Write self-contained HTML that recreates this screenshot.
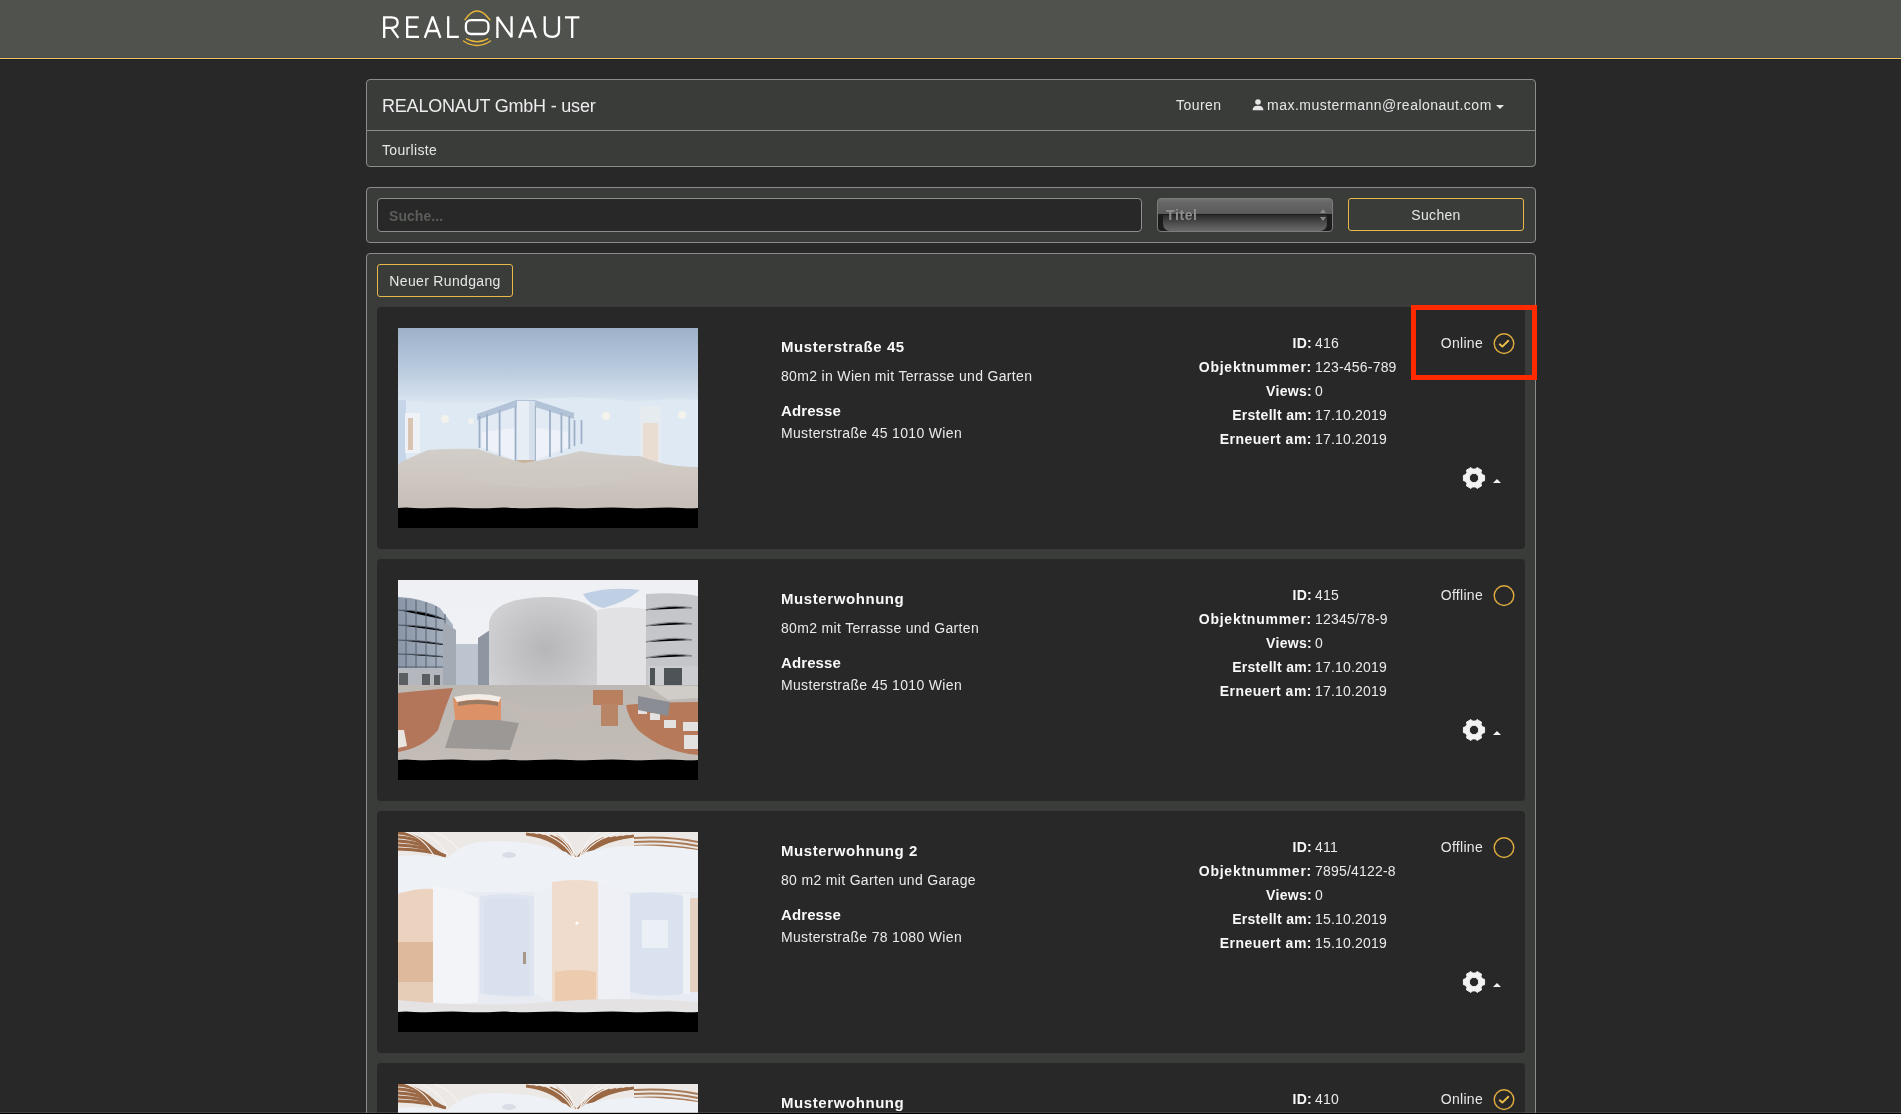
<!DOCTYPE html>
<html><head><meta charset="utf-8">
<style>
*{box-sizing:border-box;margin:0;padding:0}
html,body{-webkit-font-smoothing:antialiased;width:1901px;height:1114px;overflow:hidden;background:#282828;font-family:"Liberation Sans",sans-serif;color:#e6e6e6}
.abs{position:absolute}
#hdr{position:absolute;left:0;top:0;width:1901px;height:58px;background:#50524e}
#hdr .l1{position:absolute;left:0;top:57px;width:100%;height:1px;background:#484c52}
#hdr .l2{position:absolute;left:0;top:58px;width:100%;height:1px;background:#f0c55c}
#hdr .l3{position:absolute;left:0;top:59px;width:100%;height:1px;background:#181d26}
#logo{position:absolute;left:0;top:0}
.panel{position:absolute;left:366px;width:1170px;background:#3a3c3a;border:1px solid #8c8c8c;border-radius:4px}
.t14{font-size:14px;letter-spacing:0.33px;white-space:nowrap;line-height:14px}
.card{position:absolute;left:377px;width:1148px;height:242px;background:#282828;border-radius:4px}
.img{position:absolute;left:21px;top:21px;width:300px;height:200px;overflow:hidden;background:#000}
.img svg{display:block}
.title{position:absolute;left:404px;top:32px;font-size:15px;line-height:15px;font-weight:bold;letter-spacing:0.58px;white-space:nowrap;color:#f8f8f8}
.t2{top:96px;letter-spacing:0.1px}
.desc{position:absolute;left:404px;font-size:14px;line-height:14px;letter-spacing:0.33px;white-space:nowrap;color:#eaeaea}
.d1{top:62px}
.d2{top:119px}
.info{position:absolute;left:934px;top:24px;width:200px;height:130px}
.row{position:absolute;left:0;height:24px;line-height:24px;font-size:14px;white-space:nowrap}
.row b{position:absolute;right:-1px;letter-spacing:0.3px;color:#f8f8f8;font-weight:bold}
.row span{position:absolute;left:4px;letter-spacing:0.2px;color:#eaeaea}
.status{position:absolute;right:42px;top:29px;font-size:14px;line-height:14px;letter-spacing:0.3px;color:#e6e6e6;white-space:nowrap}
.chk{position:absolute;left:1115px;top:25px}
.gear{position:absolute;left:1084.8px;top:158.6px}
.caret{position:absolute;left:1116px;top:172px;width:0;height:0;border-left:4px solid transparent;border-right:4px solid transparent;border-bottom:4px solid #f2f2f2}
.btn{position:absolute;border:1px solid #e8b84a;border-radius:3px;font-size:14px;letter-spacing:0.33px;color:#e6e6e6;text-align:center;white-space:nowrap}

#root{position:absolute;left:0;top:0;width:1901px;height:1114px;will-change:transform}

</style></head><body>
<div id="root">
<div id="hdr"><div class="l1"></div><div class="l2"></div><div class="l3"></div>
<svg id="logo" width="620" height="58" viewBox="0 0 620 58">
 <g fill="none" stroke="#ffffff" stroke-width="2.3" stroke-linejoin="miter" stroke-miterlimit="1.6">
  <path d="M384.2 37.9 V17.4 H391.5 Q397.6 17.4 397.6 22.6 Q397.6 27.8 391.5 27.8 H384.2 M391.2 27.8 L398.4 37.9"/>
  <path d="M418.8 17.4 H407.2 V36.8 H419 M407.2 26.9 H417.4"/>
  <path d="M424.8 37.9 L432.6 16.6 L440.4 37.9 M427.3 31 H437.9"/>
  <path d="M448.2 16.3 V36.8 H458.8"/>
  <path d="M497.4 37.9 V17 L511.6 37.2 V16.3"/>
  <path d="M519.2 37.9 L527.6 16.6 L536 37.9 M521.8 31 H533.4"/>
  <path d="M544.7 16.3 V30.2 Q544.7 36.8 552.2 36.8 Q559.0 36.8 559.0 30.2 V16.3"/>
  <path d="M565 17.4 H579.4 M572.2 17.4 V37.9"/>
  <rect x="465.9" y="20.1" width="22.5" height="13.9" rx="5.2"/>
 </g>
 <g fill="none" stroke="#e9b43a" stroke-width="1.5" stroke-linecap="round">
  <path d="M465 19.6 Q477 2.5 489.8 19.8"/>
  <path d="M463.5 41 Q477 50 490.5 41"/>
  <path d="M466.5 38.8 Q477 44.5 487.8 38.8"/>
 </g>
</svg>
</div>

<div class="panel" style="top:79px;height:88px">
  <div class="abs" style="left:0;top:50px;width:100%;height:1px;background:#8c8c8c"></div>
  <div class="abs" style="left:15px;top:17px;font-size:18px;line-height:18px;letter-spacing:-0.2px;white-space:nowrap;color:#ececec">REALONAUT GmbH - user</div>
  <div class="abs t14" style="left:15px;top:63px">Tourliste</div>
  <div class="abs t14" style="left:809px;top:18px;letter-spacing:0.45px">Touren</div>
  <svg class="abs" style="left:885px;top:19px" width="12" height="12" viewBox="0 0 12 12"><circle cx="6" cy="3" r="2.8" fill="#e6e6e6"/><path d="M0.6 11.2 Q0.6 6.8 6 6.8 Q11.4 6.8 11.4 11.2 Z" fill="#e6e6e6"/></svg>
  <div class="abs t14" style="left:900px;top:18px;letter-spacing:0.49px">max.mustermann@realonaut.com</div>
  <div class="abs" style="left:1129px;top:25px;width:0;height:0;border-left:4px solid transparent;border-right:4px solid transparent;border-top:4px solid #e6e6e6"></div>
</div>

<div class="panel" style="top:187px;height:56px">
  <div class="abs" style="left:10px;top:10px;width:765px;height:34px;background:#282828;border:1px solid #8e8e8e;border-radius:4px"></div>
  <div class="abs" style="left:22px;top:21px;font-size:14px;line-height:14px;font-weight:bold;color:#5a5e58;letter-spacing:0.05px">Suche...</div>
  <div class="abs" style="left:790px;top:10px;width:176px;height:34px;border:1px solid #7c7c7c;border-radius:4px;overflow:hidden;background:linear-gradient(#707070 0%,#666 12%,#5a5a5a 47%,#1c1c1c 48%,#1c1c1c 100%)"><div class="abs" style="left:5px;top:16px;width:164px;height:16px;border-radius:0 0 7px 7px;background:linear-gradient(#2a2a2a,#4c4c4c 50%,#6a6a6a)"></div><div class="abs" style="left:162px;top:10px;width:0;height:0;border-left:3.5px solid transparent;border-right:3.5px solid transparent;border-bottom:4.5px solid #8a8a8a"></div><div class="abs" style="left:162px;top:18px;width:0;height:0;border-left:3.5px solid transparent;border-right:3.5px solid transparent;border-top:4.5px solid #8a8a8a"></div></div>
  <div class="abs" style="left:799px;top:20px;font-size:14px;line-height:14px;font-weight:bold;color:#8e8e8e;letter-spacing:0.6px">Titel</div>
  <div class="btn" style="left:981px;top:10px;width:176px;height:33px;line-height:33px">Suchen</div>
</div>

<div class="panel" style="top:253px;height:900px">
  <div class="btn" style="left:10px;top:10px;width:136px;height:33px;line-height:33px">Neuer Rundgang</div>
</div>

<div class="card" style="top:307px">
<div class="img"><svg width="300" height="200" viewBox="0 0 300 200">
<defs>
<linearGradient id="c1" x1="0" y1="0" x2="0" y2="1"><stop offset="0" stop-color="#9db1c9"/><stop offset="0.5" stop-color="#b6c8dc"/><stop offset="0.85" stop-color="#d0dcea"/><stop offset="1" stop-color="#dde7f2"/></linearGradient>
<linearGradient id="f1" x1="0" y1="0" x2="0" y2="1"><stop offset="0" stop-color="#d2cec9"/><stop offset="0.45" stop-color="#cfc8c1"/><stop offset="1" stop-color="#c6bfb9"/></linearGradient>
<filter id="bl1"><feGaussianBlur stdDeviation="0.45"/></filter>
</defs>
<rect width="300" height="76" fill="url(#c1)"/><rect y="75" width="300" height="110" fill="#dde7f2"/>
<g filter="url(#bl1)">
<path d="M0 72 Q60 80 125 72 Q185 66 235 74 Q270 70 300 72 V140 H0 Z" fill="#dfe9f3"/>
<path d="M0 72 H8 V140 H0 Z" fill="#c6d6e8"/>
<rect x="7" y="85" width="15" height="40" fill="#eef2f6"/>
<rect x="10" y="90" width="5" height="32" fill="#d8c4b0"/>
<rect x="242" y="78" width="21" height="62" fill="#e6ebf0"/>
<rect x="245" y="95" width="15" height="42" fill="#e9ddd2"/>




<path d="M81 88 L118 77 V134 L81 120 Z" fill="#e2eaf4"/>
<path d="M137 77 L172 88 V120 L137 134 Z" fill="#e2eaf4"/>
<path d="M84 104 L117 100 V132 L84 119Z" fill="#eef2f8"/>
<path d="M138 100 L170 104 V119 L138 132Z" fill="#eef2f8"/>
<path d="M79 86 L118 72 H137 L176 85 V91 L137 79 H118 L79 92 Z" fill="#b2c3d8"/>
<g stroke="#9db0c7" stroke-width="1.8"><path d="M81.5 88 V120"/><path d="M89 86 V123"/><path d="M101.6 82 V129"/><path d="M117.5 78 V134"/><path d="M137 78 V134"/><path d="M152 82 V129"/><path d="M163.4 85 V125"/><path d="M171.3 88 V121"/><path d="M176.5 92 V118"/><path d="M183.5 92 V116"/></g>
<rect x="119" y="73" width="17.5" height="62" fill="#e6edf4"/>
<rect x="131" y="73" width="5.5" height="62" fill="#d6e0ec"/>
<rect x="119" y="132" width="17.5" height="3" fill="#c8b49c"/>
<path d="M0 136 Q15 128 30 122 Q55 120 80 121 Q100 128 125 135 Q150 132 182 123 Q210 128 242 128 Q270 140 300 139 V180 H0 Z" fill="url(#f1)"/>
<path d="M60 150 Q150 140 240 150 Q150 170 60 150Z" fill="#cfc9c2" opacity="0.6"/>
<circle cx="47" cy="91" r="4" fill="#f8f4ea" opacity="0.8"/><circle cx="73" cy="93" r="3" fill="#f8f4ea" opacity="0.7"/><circle cx="208" cy="88" r="4" fill="#f8f4ea" opacity="0.8"/><circle cx="284" cy="87" r="4" fill="#f8f4ea" opacity="0.8"/>
</g>
<path d="M0 180 Q8 179.2 16 180 Q30 180.6 44 179.8 Q56 179.2 68 180 Q84 180.6 100 179.7 Q108 179.3 116 180 Q130 180.6 146 179.8 Q160 179.2 172 180 Q190 180.6 204 179.8 Q216 179.3 230 180 Q246 180.6 260 179.8 Q272 179.3 284 180 Q292 180.5 300 180 V200 H0 Z" fill="#000"/>
</svg>
</div>
<div class="title">Musterstraße 45</div>
<div class="desc d1">80m2 in Wien mit Terrasse und Garten</div>
<div class="title t2">Adresse</div>
<div class="desc d2">Musterstraße 45 1010 Wien</div>
<div class="info"><div class="row" style="top:0px"><b style="letter-spacing:0.3px">ID:</b><span>416</span></div><div class="row" style="top:24px"><b style="letter-spacing:0.75px">Objektnummer:</b><span>123-456-789</span></div><div class="row" style="top:48px"><b style="letter-spacing:0.3px">Views:</b><span>0</span></div><div class="row" style="top:72px"><b style="letter-spacing:0.3px">Erstellt am:</b><span>17.10.2019</span></div><div class="row" style="top:96px"><b style="letter-spacing:0.5px">Erneuert am:</b><span>17.10.2019</span></div></div>
<div class="status">Online</div><svg class="chk" width="24" height="24" viewBox="0 0 24 24"><circle cx="12" cy="11.6" r="9.8" fill="none" stroke="#dcaa3e" stroke-width="1.45"/><path d="M7.8 12.3 L10.3 14.6 L16.3 8.8" fill="none" stroke="#f0c048" stroke-width="1.9" stroke-linecap="round" stroke-linejoin="round"/></svg>
<svg class="gear" width="24" height="24" viewBox="0 0 24 24"><path d="M20.40 8.77 L22.58 9.36 L22.58 14.64 L20.40 15.23 L18.99 17.66 L19.57 19.84 L15.00 22.48 L13.41 20.89 L10.59 20.89 L9.00 22.48 L4.43 19.84 L5.01 17.66 L3.60 15.23 L1.42 14.64 L1.42 9.36 L3.60 8.77 L5.01 6.34 L4.43 4.16 L9.00 1.52 L10.59 3.11 L13.41 3.11 L15.00 1.52 L19.57 4.16 L18.99 6.34 Z M16.7 12 A4.7 4.7 0 1 0 7.3 12 A4.7 4.7 0 1 0 16.7 12 Z" fill="#f2f2f2" fill-rule="evenodd" stroke="#f2f2f2" stroke-width="1" stroke-linejoin="round"/></svg>
<div class="caret"></div>
</div>
<div class="card" style="top:559px">
<div class="img"><svg width="300" height="200" viewBox="0 0 300 200">
<defs>
<linearGradient id="s2" x1="0" y1="0" x2="0" y2="1"><stop offset="0" stop-color="#eef0f4"/><stop offset="1" stop-color="#f4f4f6"/></linearGradient>
<radialGradient id="cy2" cx="0.5" cy="0.5" r="0.6"><stop offset="0" stop-color="#b6b6b8"/><stop offset="1" stop-color="#d2d2d4"/></radialGradient>
<linearGradient id="g2" x1="0" y1="0" x2="0" y2="1"><stop offset="0" stop-color="#bcb8b4"/><stop offset="1" stop-color="#c4bcb6"/></linearGradient>
<linearGradient id="lb2" x1="0" y1="0" x2="1" y2="0"><stop offset="0" stop-color="#8a96a8"/><stop offset="1" stop-color="#aab4c2"/></linearGradient>
<filter id="bl2"><feGaussianBlur stdDeviation="0.6"/></filter>
</defs>
<rect width="300" height="200" fill="url(#s2)"/>
<g filter="url(#bl2)">
<path d="M185 14 Q212 6 242 10 Q228 22 205 28 Q190 24 185 14Z" fill="#bfd0e4"/>
<rect x="58" y="64" width="24" height="42" fill="#bcc4d0"/>
<path d="M0 17 Q25 18 42 28 L55 45 V110 H0 Z" fill="url(#lb2)"/>
<g stroke="#56606e" stroke-width="1"><path d="M0 30 Q28 30 48 40"/><path d="M0 45 Q30 45 52 52"/><path d="M0 60 Q30 60 54 66"/><path d="M0 74 Q30 74 55 78"/><path d="M0 87 H55"/><path d="M8 19 V88"/><path d="M18 20 V88"/><path d="M28 22 V88"/><path d="M38 26 V88"/><path d="M47 34 V88"/></g>
<rect x="0" y="88" width="55" height="22" fill="#b4b8be"/>
<g fill="#5c5e62"><rect x="1" y="93" width="9" height="15"/><rect x="24" y="94" width="8" height="14"/><rect x="36" y="95" width="6" height="13"/></g>
<path d="M45 42 L58 50 V106 H45 Z" fill="#a4aab4"/>
<path d="M80 58 L92 50 V108 H80 Z" fill="#8e96a2"/>
<path d="M91 42 Q96 18 147 17 Q196 17 204 40 V116 Q150 126 91 116 Z" fill="url(#cy2)"/>
<path d="M91 108 Q150 124 205 108 V120 Q150 132 95 120Z" fill="#a0a0a2"/>
<path d="M199 30 Q222 25 248 29 V108 H199 Z" fill="#e2e2e4"/>
<path d="M248 14 Q280 12 300 16 V112 H248 Z" fill="#c4c6ca"/>
<g stroke="#80848a" stroke-width="1.3"><path d="M248 30 Q275 24 294 28"/><path d="M248 46 Q275 40 294 44"/><path d="M248 62 Q275 56 294 60"/><path d="M248 78 Q275 72 294 76"/></g>
<rect x="250" y="86" width="50" height="24" fill="#cacccf"/>
<g fill="#4e5256"><rect x="252" y="88" width="5" height="20"/><rect x="266" y="88" width="18" height="20"/></g>
<path d="M0 105 H300 V180 H0Z" fill="url(#g2)"/>
<path d="M100 118 Q150 138 230 115 Q210 150 150 148 Q110 145 100 118Z" fill="#c2bab4"/>
<path d="M0 113 Q30 110 55 108 Q48 125 40 150 Q25 168 0 172 Z" fill="#b4765a"/>
<path d="M0 150 L6 150 L9 166 L0 168Z" fill="#e8e4e0"/>
<path d="M55 118 Q80 112 103 118 V145 Q80 150 58 148 Z" fill="#dc9266"/>
<path d="M56 117 Q80 111 103 117 L101 122 Q80 117 59 122Z" fill="#f4ece6"/>
<path d="M60 122 Q80 118 100 122 L100 126 Q80 122 60 126Z" fill="#9a7a62"/>
<path d="M47 168 L56 140 L100 140 L121 143 L112 170 Z" fill="#9c9896"/>
<path d="M195 110 H225 V125 H195Z" fill="#b8805e"/>
<rect x="203" y="124" width="17" height="22" fill="#b88666"/>
<path d="M228 125 Q255 122 300 122 V175 Q265 172 240 150 Q230 138 228 125Z" fill="#b67a5a"/>
<g fill="#e4e2e0"><rect x="240" y="128" width="9" height="6"/><rect x="252" y="133" width="10" height="7"/><rect x="266" y="140" width="12" height="8"/><rect x="285" y="142" width="15" height="9"/><rect x="286" y="155" width="14" height="14"/></g>
<path d="M240 116 L272 122 L270 136 L240 130 Z" fill="#8a8e94"/>
<path d="M250 106 H300 V118 L270 120 Z" fill="#d0ccc8"/>
</g>
<path d="M0 180 Q8 179.2 16 180 Q30 180.6 44 179.8 Q56 179.2 68 180 Q84 180.6 100 179.7 Q108 179.3 116 180 Q130 180.6 146 179.8 Q160 179.2 172 180 Q190 180.6 204 179.8 Q216 179.3 230 180 Q246 180.6 260 179.8 Q272 179.3 284 180 Q292 180.5 300 180 V200 H0 Z" fill="#000"/>
</svg>
</div>
<div class="title">Musterwohnung</div>
<div class="desc d1">80m2 mit Terrasse und Garten</div>
<div class="title t2">Adresse</div>
<div class="desc d2">Musterstraße 45 1010 Wien</div>
<div class="info"><div class="row" style="top:0px"><b style="letter-spacing:0.3px">ID:</b><span>415</span></div><div class="row" style="top:24px"><b style="letter-spacing:0.75px">Objektnummer:</b><span>12345/78-9</span></div><div class="row" style="top:48px"><b style="letter-spacing:0.3px">Views:</b><span>0</span></div><div class="row" style="top:72px"><b style="letter-spacing:0.3px">Erstellt am:</b><span>17.10.2019</span></div><div class="row" style="top:96px"><b style="letter-spacing:0.5px">Erneuert am:</b><span>17.10.2019</span></div></div>
<div class="status">Offline</div><svg class="chk" width="24" height="24" viewBox="0 0 24 24"><circle cx="12" cy="11.6" r="9.8" fill="none" stroke="#dcaa3e" stroke-width="1.45"/></svg>
<svg class="gear" width="24" height="24" viewBox="0 0 24 24"><path d="M20.40 8.77 L22.58 9.36 L22.58 14.64 L20.40 15.23 L18.99 17.66 L19.57 19.84 L15.00 22.48 L13.41 20.89 L10.59 20.89 L9.00 22.48 L4.43 19.84 L5.01 17.66 L3.60 15.23 L1.42 14.64 L1.42 9.36 L3.60 8.77 L5.01 6.34 L4.43 4.16 L9.00 1.52 L10.59 3.11 L13.41 3.11 L15.00 1.52 L19.57 4.16 L18.99 6.34 Z M16.7 12 A4.7 4.7 0 1 0 7.3 12 A4.7 4.7 0 1 0 16.7 12 Z" fill="#f2f2f2" fill-rule="evenodd" stroke="#f2f2f2" stroke-width="1" stroke-linejoin="round"/></svg>
<div class="caret"></div>
</div>
<div class="card" style="top:811px">
<div class="img"><svg width="300" height="200" viewBox="0 0 300 200">
<defs>
<linearGradient id="w3" x1="0" y1="0" x2="0" y2="1"><stop offset="0" stop-color="#e8ecf2"/><stop offset="1" stop-color="#e4e6ec"/></linearGradient>
<filter id="bl3"><feGaussianBlur stdDeviation="0.5"/></filter>
</defs>
<rect width="300" height="200" fill="url(#w3)"/>
<g filter="url(#bl3)">
<rect x="0" y="0" width="300" height="32" fill="#ebe8e6"/>
<g fill="none" stroke-linecap="butt">
<path d="M0 1 Q22 2 40 22.0" stroke="#9a6844" stroke-width="3"/>
<path d="M0 5 Q24 6 42 22.5" stroke="#9a6844" stroke-width="3"/>
<path d="M0 9 Q26 10 44 23.0" stroke="#9a6844" stroke-width="3"/>
<path d="M0 13 Q28 14 46 23.5" stroke="#9a6844" stroke-width="3"/>
<path d="M0 17 Q30 18 48 24.0" stroke="#9a6844" stroke-width="3"/>
<path d="M8 0 Q26 6 36 24" stroke="#f6f4f2" stroke-width="1.2"/>
<path d="M22 0 Q40 6 50 24" stroke="#f6f4f2" stroke-width="1.2"/>
<path d="M36 0 Q54 6 64 24" stroke="#f6f4f2" stroke-width="1.2"/>
<path d="M128 2.0 Q160 6 174.0 28" stroke="#9a6844" stroke-width="3"/>
<path d="M236 4.0 Q200 8 182.0 28" stroke="#9a6844" stroke-width="3"/>
<path d="M134 2.5 Q162 7 174.8 28" stroke="#9a6844" stroke-width="3"/>
<path d="M230 4.5 Q198 9 181.2 28" stroke="#9a6844" stroke-width="3"/>
<path d="M140 3.0 Q164 8 175.6 28" stroke="#9a6844" stroke-width="3"/>
<path d="M224 5.0 Q196 10 180.4 28" stroke="#9a6844" stroke-width="3"/>
<path d="M146 3.5 Q166 9 176.4 28" stroke="#9a6844" stroke-width="3"/>
<path d="M218 5.5 Q194 11 179.6 28" stroke="#9a6844" stroke-width="3"/>
<path d="M152 4.0 Q168 10 177.2 28" stroke="#9a6844" stroke-width="3"/>
<path d="M212 6.0 Q192 12 178.8 28" stroke="#9a6844" stroke-width="3"/>
<path d="M158 4.5 Q170 11 178.0 28" stroke="#9a6844" stroke-width="3"/>
<path d="M206 6.5 Q190 13 178.0 28" stroke="#9a6844" stroke-width="3"/>
<path d="M140 0 Q168 8 176.0 28" stroke="#f6f4f2" stroke-width="1.2"/>
<path d="M222 0 Q192 8 182.0 28" stroke="#f6f4f2" stroke-width="1.2"/>
<path d="M150 0 Q171 8 176.5 28" stroke="#f6f4f2" stroke-width="1.2"/>
<path d="M212 0 Q189 8 181.5 28" stroke="#f6f4f2" stroke-width="1.2"/>
<path d="M160 0 Q174 8 177.0 28" stroke="#f6f4f2" stroke-width="1.2"/>
<path d="M202 0 Q186 8 181.0 28" stroke="#f6f4f2" stroke-width="1.2"/>
<path d="M236 6 Q270 4 300 10" stroke="#a87a58" stroke-width="2"/>
<path d="M236 10 Q270 8 300 14" stroke="#a87a58" stroke-width="2"/>
<path d="M236 14 Q270 12 300 18" stroke="#a87a58" stroke-width="2"/>
</g>
<path d="M0 24 Q20 22 50 26 Q60 14 80 10 Q125 6 168 20 Q178 30 188 20 Q230 8 300 18 V60 H0Z" fill="#eef1f6"/>
<ellipse cx="111" cy="23" rx="7" ry="3" fill="#d8dde6"/>
<rect x="0" y="60" width="300" height="118" fill="#e8ebf1"/>
<path d="M0 62 Q18 56 35 57 V176 L0 176Z" fill="#ecd3c0"/>
<path d="M0 110 H35 V176 H0Z" fill="#dfb99c"/>
<path d="M0 150 H35 V178 H0Z" fill="#e6cdb8"/>
<rect x="35" y="54" width="9" height="122" fill="#f2f4f8"/>
<path d="M44 56 Q65 58 80 66 V170 Q62 172 44 175Z" fill="#f2f4f8"/>
<path d="M82 64 Q108 60 136 64 V164 Q108 166 82 162Z" fill="#dee5f0"/>
<path d="M86 68 Q108 64 131 68 V163 Q108 165 86 161Z" fill="#d9e1ee"/>
<rect x="125" y="120" width="3" height="12" fill="#a89888"/>
<rect x="138" y="102" width="5" height="5" fill="#7c8290"/>
<path d="M136 60 L154 56 V170 L136 162Z" fill="#eceff4"/>
<path d="M154 50 Q180 46 200 50 V170 Q178 166 154 170Z" fill="#f0dccc"/>
<path d="M157 140 Q178 136 198 140 V170 H157Z" fill="#eccbae"/>
<circle cx="179" cy="91" r="1.6" fill="#fff"/>
<path d="M200 50 L232 62 V168 L200 172Z" fill="#eef0f5"/>
<path d="M232 62 Q258 58 285 64 V162 Q258 166 232 160Z" fill="#d9e2ee"/>
<rect x="244" y="88" width="26" height="28" fill="#eaf0f6"/>
<rect x="285" y="62" width="7" height="100" fill="#eef1f6"/>
<path d="M292 66 H300 V160 H292Z" fill="#e6d2c2"/>
<path d="M0 168 Q80 176 150 170 Q220 164 300 170 V180 H0Z" fill="#e4e2e2"/>
</g>
<path d="M0 180 Q8 179.2 16 180 Q30 180.6 44 179.8 Q56 179.2 68 180 Q84 180.6 100 179.7 Q108 179.3 116 180 Q130 180.6 146 179.8 Q160 179.2 172 180 Q190 180.6 204 179.8 Q216 179.3 230 180 Q246 180.6 260 179.8 Q272 179.3 284 180 Q292 180.5 300 180 V200 H0 Z" fill="#000"/>
</svg>
</div>
<div class="title">Musterwohnung 2</div>
<div class="desc d1">80 m2 mit Garten und Garage</div>
<div class="title t2">Adresse</div>
<div class="desc d2">Musterstraße 78 1080 Wien</div>
<div class="info"><div class="row" style="top:0px"><b style="letter-spacing:0.3px">ID:</b><span>411</span></div><div class="row" style="top:24px"><b style="letter-spacing:0.75px">Objektnummer:</b><span>7895/4122-8</span></div><div class="row" style="top:48px"><b style="letter-spacing:0.3px">Views:</b><span>0</span></div><div class="row" style="top:72px"><b style="letter-spacing:0.3px">Erstellt am:</b><span>15.10.2019</span></div><div class="row" style="top:96px"><b style="letter-spacing:0.5px">Erneuert am:</b><span>15.10.2019</span></div></div>
<div class="status">Offline</div><svg class="chk" width="24" height="24" viewBox="0 0 24 24"><circle cx="12" cy="11.6" r="9.8" fill="none" stroke="#dcaa3e" stroke-width="1.45"/></svg>
<svg class="gear" width="24" height="24" viewBox="0 0 24 24"><path d="M20.40 8.77 L22.58 9.36 L22.58 14.64 L20.40 15.23 L18.99 17.66 L19.57 19.84 L15.00 22.48 L13.41 20.89 L10.59 20.89 L9.00 22.48 L4.43 19.84 L5.01 17.66 L3.60 15.23 L1.42 14.64 L1.42 9.36 L3.60 8.77 L5.01 6.34 L4.43 4.16 L9.00 1.52 L10.59 3.11 L13.41 3.11 L15.00 1.52 L19.57 4.16 L18.99 6.34 Z M16.7 12 A4.7 4.7 0 1 0 7.3 12 A4.7 4.7 0 1 0 16.7 12 Z" fill="#f2f2f2" fill-rule="evenodd" stroke="#f2f2f2" stroke-width="1" stroke-linejoin="round"/></svg>
<div class="caret"></div>
</div>
<div class="card" style="top:1063px">
<div class="img"><svg width="300" height="200" viewBox="0 0 300 200">
<defs>
<linearGradient id="w3" x1="0" y1="0" x2="0" y2="1"><stop offset="0" stop-color="#e8ecf2"/><stop offset="1" stop-color="#e4e6ec"/></linearGradient>
<filter id="bl3"><feGaussianBlur stdDeviation="0.5"/></filter>
</defs>
<rect width="300" height="200" fill="url(#w3)"/>
<g filter="url(#bl3)">
<rect x="0" y="0" width="300" height="32" fill="#ebe8e6"/>
<g fill="none" stroke-linecap="butt">
<path d="M0 1 Q22 2 40 22.0" stroke="#9a6844" stroke-width="3"/>
<path d="M0 5 Q24 6 42 22.5" stroke="#9a6844" stroke-width="3"/>
<path d="M0 9 Q26 10 44 23.0" stroke="#9a6844" stroke-width="3"/>
<path d="M0 13 Q28 14 46 23.5" stroke="#9a6844" stroke-width="3"/>
<path d="M0 17 Q30 18 48 24.0" stroke="#9a6844" stroke-width="3"/>
<path d="M8 0 Q26 6 36 24" stroke="#f6f4f2" stroke-width="1.2"/>
<path d="M22 0 Q40 6 50 24" stroke="#f6f4f2" stroke-width="1.2"/>
<path d="M36 0 Q54 6 64 24" stroke="#f6f4f2" stroke-width="1.2"/>
<path d="M128 2.0 Q160 6 174.0 28" stroke="#9a6844" stroke-width="3"/>
<path d="M236 4.0 Q200 8 182.0 28" stroke="#9a6844" stroke-width="3"/>
<path d="M134 2.5 Q162 7 174.8 28" stroke="#9a6844" stroke-width="3"/>
<path d="M230 4.5 Q198 9 181.2 28" stroke="#9a6844" stroke-width="3"/>
<path d="M140 3.0 Q164 8 175.6 28" stroke="#9a6844" stroke-width="3"/>
<path d="M224 5.0 Q196 10 180.4 28" stroke="#9a6844" stroke-width="3"/>
<path d="M146 3.5 Q166 9 176.4 28" stroke="#9a6844" stroke-width="3"/>
<path d="M218 5.5 Q194 11 179.6 28" stroke="#9a6844" stroke-width="3"/>
<path d="M152 4.0 Q168 10 177.2 28" stroke="#9a6844" stroke-width="3"/>
<path d="M212 6.0 Q192 12 178.8 28" stroke="#9a6844" stroke-width="3"/>
<path d="M158 4.5 Q170 11 178.0 28" stroke="#9a6844" stroke-width="3"/>
<path d="M206 6.5 Q190 13 178.0 28" stroke="#9a6844" stroke-width="3"/>
<path d="M140 0 Q168 8 176.0 28" stroke="#f6f4f2" stroke-width="1.2"/>
<path d="M222 0 Q192 8 182.0 28" stroke="#f6f4f2" stroke-width="1.2"/>
<path d="M150 0 Q171 8 176.5 28" stroke="#f6f4f2" stroke-width="1.2"/>
<path d="M212 0 Q189 8 181.5 28" stroke="#f6f4f2" stroke-width="1.2"/>
<path d="M160 0 Q174 8 177.0 28" stroke="#f6f4f2" stroke-width="1.2"/>
<path d="M202 0 Q186 8 181.0 28" stroke="#f6f4f2" stroke-width="1.2"/>
<path d="M236 6 Q270 4 300 10" stroke="#a87a58" stroke-width="2"/>
<path d="M236 10 Q270 8 300 14" stroke="#a87a58" stroke-width="2"/>
<path d="M236 14 Q270 12 300 18" stroke="#a87a58" stroke-width="2"/>
</g>
<path d="M0 24 Q20 22 50 26 Q60 14 80 10 Q125 6 168 20 Q178 30 188 20 Q230 8 300 18 V60 H0Z" fill="#eef1f6"/>
<ellipse cx="111" cy="23" rx="7" ry="3" fill="#d8dde6"/>
<rect x="0" y="60" width="300" height="118" fill="#e8ebf1"/>
<path d="M0 62 Q18 56 35 57 V176 L0 176Z" fill="#ecd3c0"/>
<path d="M0 110 H35 V176 H0Z" fill="#dfb99c"/>
<path d="M0 150 H35 V178 H0Z" fill="#e6cdb8"/>
<rect x="35" y="54" width="9" height="122" fill="#f2f4f8"/>
<path d="M44 56 Q65 58 80 66 V170 Q62 172 44 175Z" fill="#f2f4f8"/>
<path d="M82 64 Q108 60 136 64 V164 Q108 166 82 162Z" fill="#dee5f0"/>
<path d="M86 68 Q108 64 131 68 V163 Q108 165 86 161Z" fill="#d9e1ee"/>
<rect x="125" y="120" width="3" height="12" fill="#a89888"/>
<rect x="138" y="102" width="5" height="5" fill="#7c8290"/>
<path d="M136 60 L154 56 V170 L136 162Z" fill="#eceff4"/>
<path d="M154 50 Q180 46 200 50 V170 Q178 166 154 170Z" fill="#f0dccc"/>
<path d="M157 140 Q178 136 198 140 V170 H157Z" fill="#eccbae"/>
<circle cx="179" cy="91" r="1.6" fill="#fff"/>
<path d="M200 50 L232 62 V168 L200 172Z" fill="#eef0f5"/>
<path d="M232 62 Q258 58 285 64 V162 Q258 166 232 160Z" fill="#d9e2ee"/>
<rect x="244" y="88" width="26" height="28" fill="#eaf0f6"/>
<rect x="285" y="62" width="7" height="100" fill="#eef1f6"/>
<path d="M292 66 H300 V160 H292Z" fill="#e6d2c2"/>
<path d="M0 168 Q80 176 150 170 Q220 164 300 170 V180 H0Z" fill="#e4e2e2"/>
</g>
<path d="M0 180 Q8 179.2 16 180 Q30 180.6 44 179.8 Q56 179.2 68 180 Q84 180.6 100 179.7 Q108 179.3 116 180 Q130 180.6 146 179.8 Q160 179.2 172 180 Q190 180.6 204 179.8 Q216 179.3 230 180 Q246 180.6 260 179.8 Q272 179.3 284 180 Q292 180.5 300 180 V200 H0 Z" fill="#000"/>
</svg>
</div>
<div class="title">Musterwohnung</div>
<div class="desc d1">80m2 mit Terrasse und Garten</div>
<div class="title t2">Adresse</div>
<div class="desc d2">Musterstraße 45 1010 Wien</div>
<div class="info"><div class="row" style="top:0px"><b style="letter-spacing:0.3px">ID:</b><span>410</span></div><div class="row" style="top:24px"><b style="letter-spacing:0.75px">Objektnummer:</b><span>12345/78-9</span></div><div class="row" style="top:48px"><b style="letter-spacing:0.3px">Views:</b><span>0</span></div><div class="row" style="top:72px"><b style="letter-spacing:0.3px">Erstellt am:</b><span>17.10.2019</span></div><div class="row" style="top:96px"><b style="letter-spacing:0.5px">Erneuert am:</b><span>17.10.2019</span></div></div>
<div class="status">Online</div><svg class="chk" width="24" height="24" viewBox="0 0 24 24"><circle cx="12" cy="11.6" r="9.8" fill="none" stroke="#dcaa3e" stroke-width="1.45"/><path d="M7.8 12.3 L10.3 14.6 L16.3 8.8" fill="none" stroke="#f0c048" stroke-width="1.9" stroke-linecap="round" stroke-linejoin="round"/></svg>
<svg class="gear" width="24" height="24" viewBox="0 0 24 24"><path d="M20.40 8.77 L22.58 9.36 L22.58 14.64 L20.40 15.23 L18.99 17.66 L19.57 19.84 L15.00 22.48 L13.41 20.89 L10.59 20.89 L9.00 22.48 L4.43 19.84 L5.01 17.66 L3.60 15.23 L1.42 14.64 L1.42 9.36 L3.60 8.77 L5.01 6.34 L4.43 4.16 L9.00 1.52 L10.59 3.11 L13.41 3.11 L15.00 1.52 L19.57 4.16 L18.99 6.34 Z M16.7 12 A4.7 4.7 0 1 0 7.3 12 A4.7 4.7 0 1 0 16.7 12 Z" fill="#f2f2f2" fill-rule="evenodd" stroke="#f2f2f2" stroke-width="1" stroke-linejoin="round"/></svg>
<div class="caret"></div>
</div>
<div class="abs" style="left:1411px;top:305px;width:126px;height:75px;border:5.5px solid #ff2a00"></div>
<div class="abs" style="left:0;top:1112px;width:1901px;height:1px;background:rgba(110,115,105,0.35)"></div><div class="abs" style="left:0;top:1113px;width:1901px;height:1px;background:#000"></div>

</div>
</body></html>
